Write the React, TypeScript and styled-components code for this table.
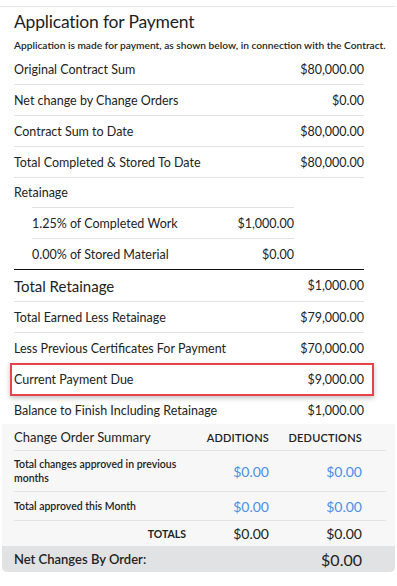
import React from "react";
import styled, { createGlobalStyle } from "styled-components";

const Global = createGlobalStyle`
  html, body { margin: 0; padding: 0; background: #fff; }
  body { font-family: Lato, "Noto Sans", sans-serif; color: #222; }
`;

const Page = styled.div`
  width: 397px;
  padding-top: 6px;
`;

const Panel = styled.div`
  border-top: 1px solid #e4e4e4;
  width: 395px;
`;

const Header = styled.div`
  padding: 4px 14px 2px 14px;
`;

const Title = styled.h1`
  margin: 0;
  font-size: 17.5px;
  font-weight: 400;
  letter-spacing: -0.2px;
  line-height: 22px;
  color: #1e1e1e;
`;

const Subtitle = styled.p`
  margin: 5px 0 0 0;
  font-size: 10.2px;
  line-height: 14px;
  font-weight: 600;
  color: #1e1e1e;
  white-space: nowrap;
`;

const Body = styled.div`
  padding: 0 31px 0 14px;
`;

const Row = styled.div<{ $h?: number; $strong?: boolean }>`
  display: flex;
  align-items: center;
  justify-content: space-between;
  height: ${(p) => p.$h ?? 30}px;
  border-bottom: 1px solid ${(p) => (p.$strong ? "#111" : "#e2e2e2")};
  font-size: 12.5px;
  color: #222;
`;

const PlainRow = styled(Row)`
  border-bottom: none;
`;

const BigLabel = styled.span`
  font-size: 15px;
`;

const SubList = styled.div`
  padding-left: 18px;
  border-bottom: 1px solid #111;
`;

const SubRow = styled.div`
  display: flex;
  align-items: center;
  justify-content: space-between;
  width: 262px;
  height: 30px;
  border-top: 1px solid #e2e2e2;
  font-size: 12.5px;
`;

const Highlight = styled.div`
  margin: 0 -10px 0 -4px;
  padding: 0 8px 0 2px;
  border: 2px solid #e8424a;
  box-shadow: 0 2px 5px rgba(0, 0, 0, 0.25);
`;

const HighlightRow = styled(Row)`
  height: 29px;
  border-bottom: none;
`;

const Summary = styled.div`
  margin: 0 2px;
  width: 393px;
  background: #f7f7f7;
  border-radius: 0 0 5px 5px;
  overflow: hidden;
`;

const Grid = styled.div`
  display: grid;
  grid-template-columns: 176px 79px 93px;
  padding: 0 9px 0 12px;
`;

const Cell = styled.div<{ $right?: boolean; $line?: boolean; $h: number; $pad?: number }>`
  display: flex;
  align-items: center;
  justify-content: ${(p) => (p.$right ? "flex-end" : "flex-start")};
  height: ${(p) => p.$h}px;
  padding-right: ${(p) => p.$pad ?? 0}px;
  margin-right: ${(p) => -(p.$pad ?? 0)}px;
  border-bottom: ${(p) => (p.$line ? "1px solid #e2e2e2" : "none")};
`;

const Heading = styled.span`
  font-size: 13px;
  color: #222;
`;

const ColHead = styled.span`
  font-size: 11px;
  font-weight: 600;
  letter-spacing: 0.2px;
  color: #222;
`;

const SmallLabel = styled.span`
  font-size: 10.5px;
  font-weight: 600;
  line-height: 14px;
  color: #222;
  padding-right: 10px;
`;

const Totals = styled.span`
  font-size: 10.5px;
  font-weight: 700;
  padding-right: 4px;
`;

const Amount = styled.span<{ $blue?: boolean }>`
  font-size: 14px;
  color: ${(p) => (p.$blue ? "#4b8fe8" : "#222")};
`;

const NetBar = styled.div`
  display: flex;
  align-items: center;
  justify-content: space-between;
  height: 26px;
  padding: 0 33px 0 12px;
  background: #e1e2e4;
`;

const NetLabel = styled.span`
  font-size: 13px;
  font-weight: 600;
  color: #222;
`;

const NetValue = styled.span`
  font-size: 16px;
  font-weight: 400;
  color: #222;
`;

const mainRows: [string, string][] = [
  ["Original Contract Sum", "$80,000.00"],
  ["Net change by Change Orders", "$0.00"],
  ["Contract Sum to Date", "$80,000.00"],
  ["Total Completed & Stored To Date", "$80,000.00"],
];

export default function App() {
  return (
    <Page>
      <Global />
      <Panel>
        <Header>
          <Title>Application for Payment</Title>
          <Subtitle>
            Application is made for payment, as shown below, in connection with the Contract.
          </Subtitle>
        </Header>
        <Body>
          {mainRows.map(([l, v]) => (
            <Row key={l}>
              <span>{l}</span>
              <span>{v}</span>
            </Row>
          ))}
          <PlainRow $h={29}>
            <span>Retainage</span>
          </PlainRow>
          <SubList>
            <SubRow>
              <span>1.25% of Completed Work</span>
              <span>$1,000.00</span>
            </SubRow>
            <SubRow>
              <span>0.00% of Stored Material</span>
              <span>$0.00</span>
            </SubRow>
          </SubList>
          <Row $h={31}>
            <BigLabel>Total Retainage</BigLabel>
            <span>$1,000.00</span>
          </Row>
          <Row>
            <span>Total Earned Less Retainage</span>
            <span>$79,000.00</span>
          </Row>
          <PlainRow>
            <span>Less Previous Certificates For Payment</span>
            <span>$70,000.00</span>
          </PlainRow>
          <Highlight>
            <HighlightRow>
              <span>Current Payment Due</span>
              <span>$9,000.00</span>
            </HighlightRow>
          </Highlight>
          <PlainRow $h={28}>
            <span>Balance to Finish Including Retainage</span>
            <span>$1,000.00</span>
          </PlainRow>
        </Body>
        <Summary>
          <Grid>
            <Cell $h={26} $line>
              <Heading>Change Order Summary</Heading>
            </Cell>
            <Cell $h={26} $line $right>
              <ColHead>ADDITIONS</ColHead>
            </Cell>
            <Cell $h={26} $line $right $pad={24}>
              <ColHead>DEDUCTIONS</ColHead>
            </Cell>

            <Cell $h={40} $line>
              <SmallLabel>Total changes approved in previous months</SmallLabel>
            </Cell>
            <Cell $h={40} $line $right>
              <Amount $blue>$0.00</Amount>
            </Cell>
            <Cell $h={40} $line $right $pad={24}>
              <Amount $blue>$0.00</Amount>
            </Cell>

            <Cell $h={28} $line>
              <SmallLabel>Total approved this Month</SmallLabel>
            </Cell>
            <Cell $h={28} $line $right>
              <Amount $blue>$0.00</Amount>
            </Cell>
            <Cell $h={28} $line $right $pad={24}>
              <Amount $blue>$0.00</Amount>
            </Cell>

            <Cell $h={25} $right>
              <Totals>TOTALS</Totals>
            </Cell>
            <Cell $h={25} $right>
              <Amount>$0.00</Amount>
            </Cell>
            <Cell $h={25} $right>
              <Amount>$0.00</Amount>
            </Cell>
          </Grid>
          <NetBar>
            <NetLabel>Net Changes By Order:</NetLabel>
            <NetValue>$0.00</NetValue>
          </NetBar>
        </Summary>
      </Panel>
    </Page>
  );
}
